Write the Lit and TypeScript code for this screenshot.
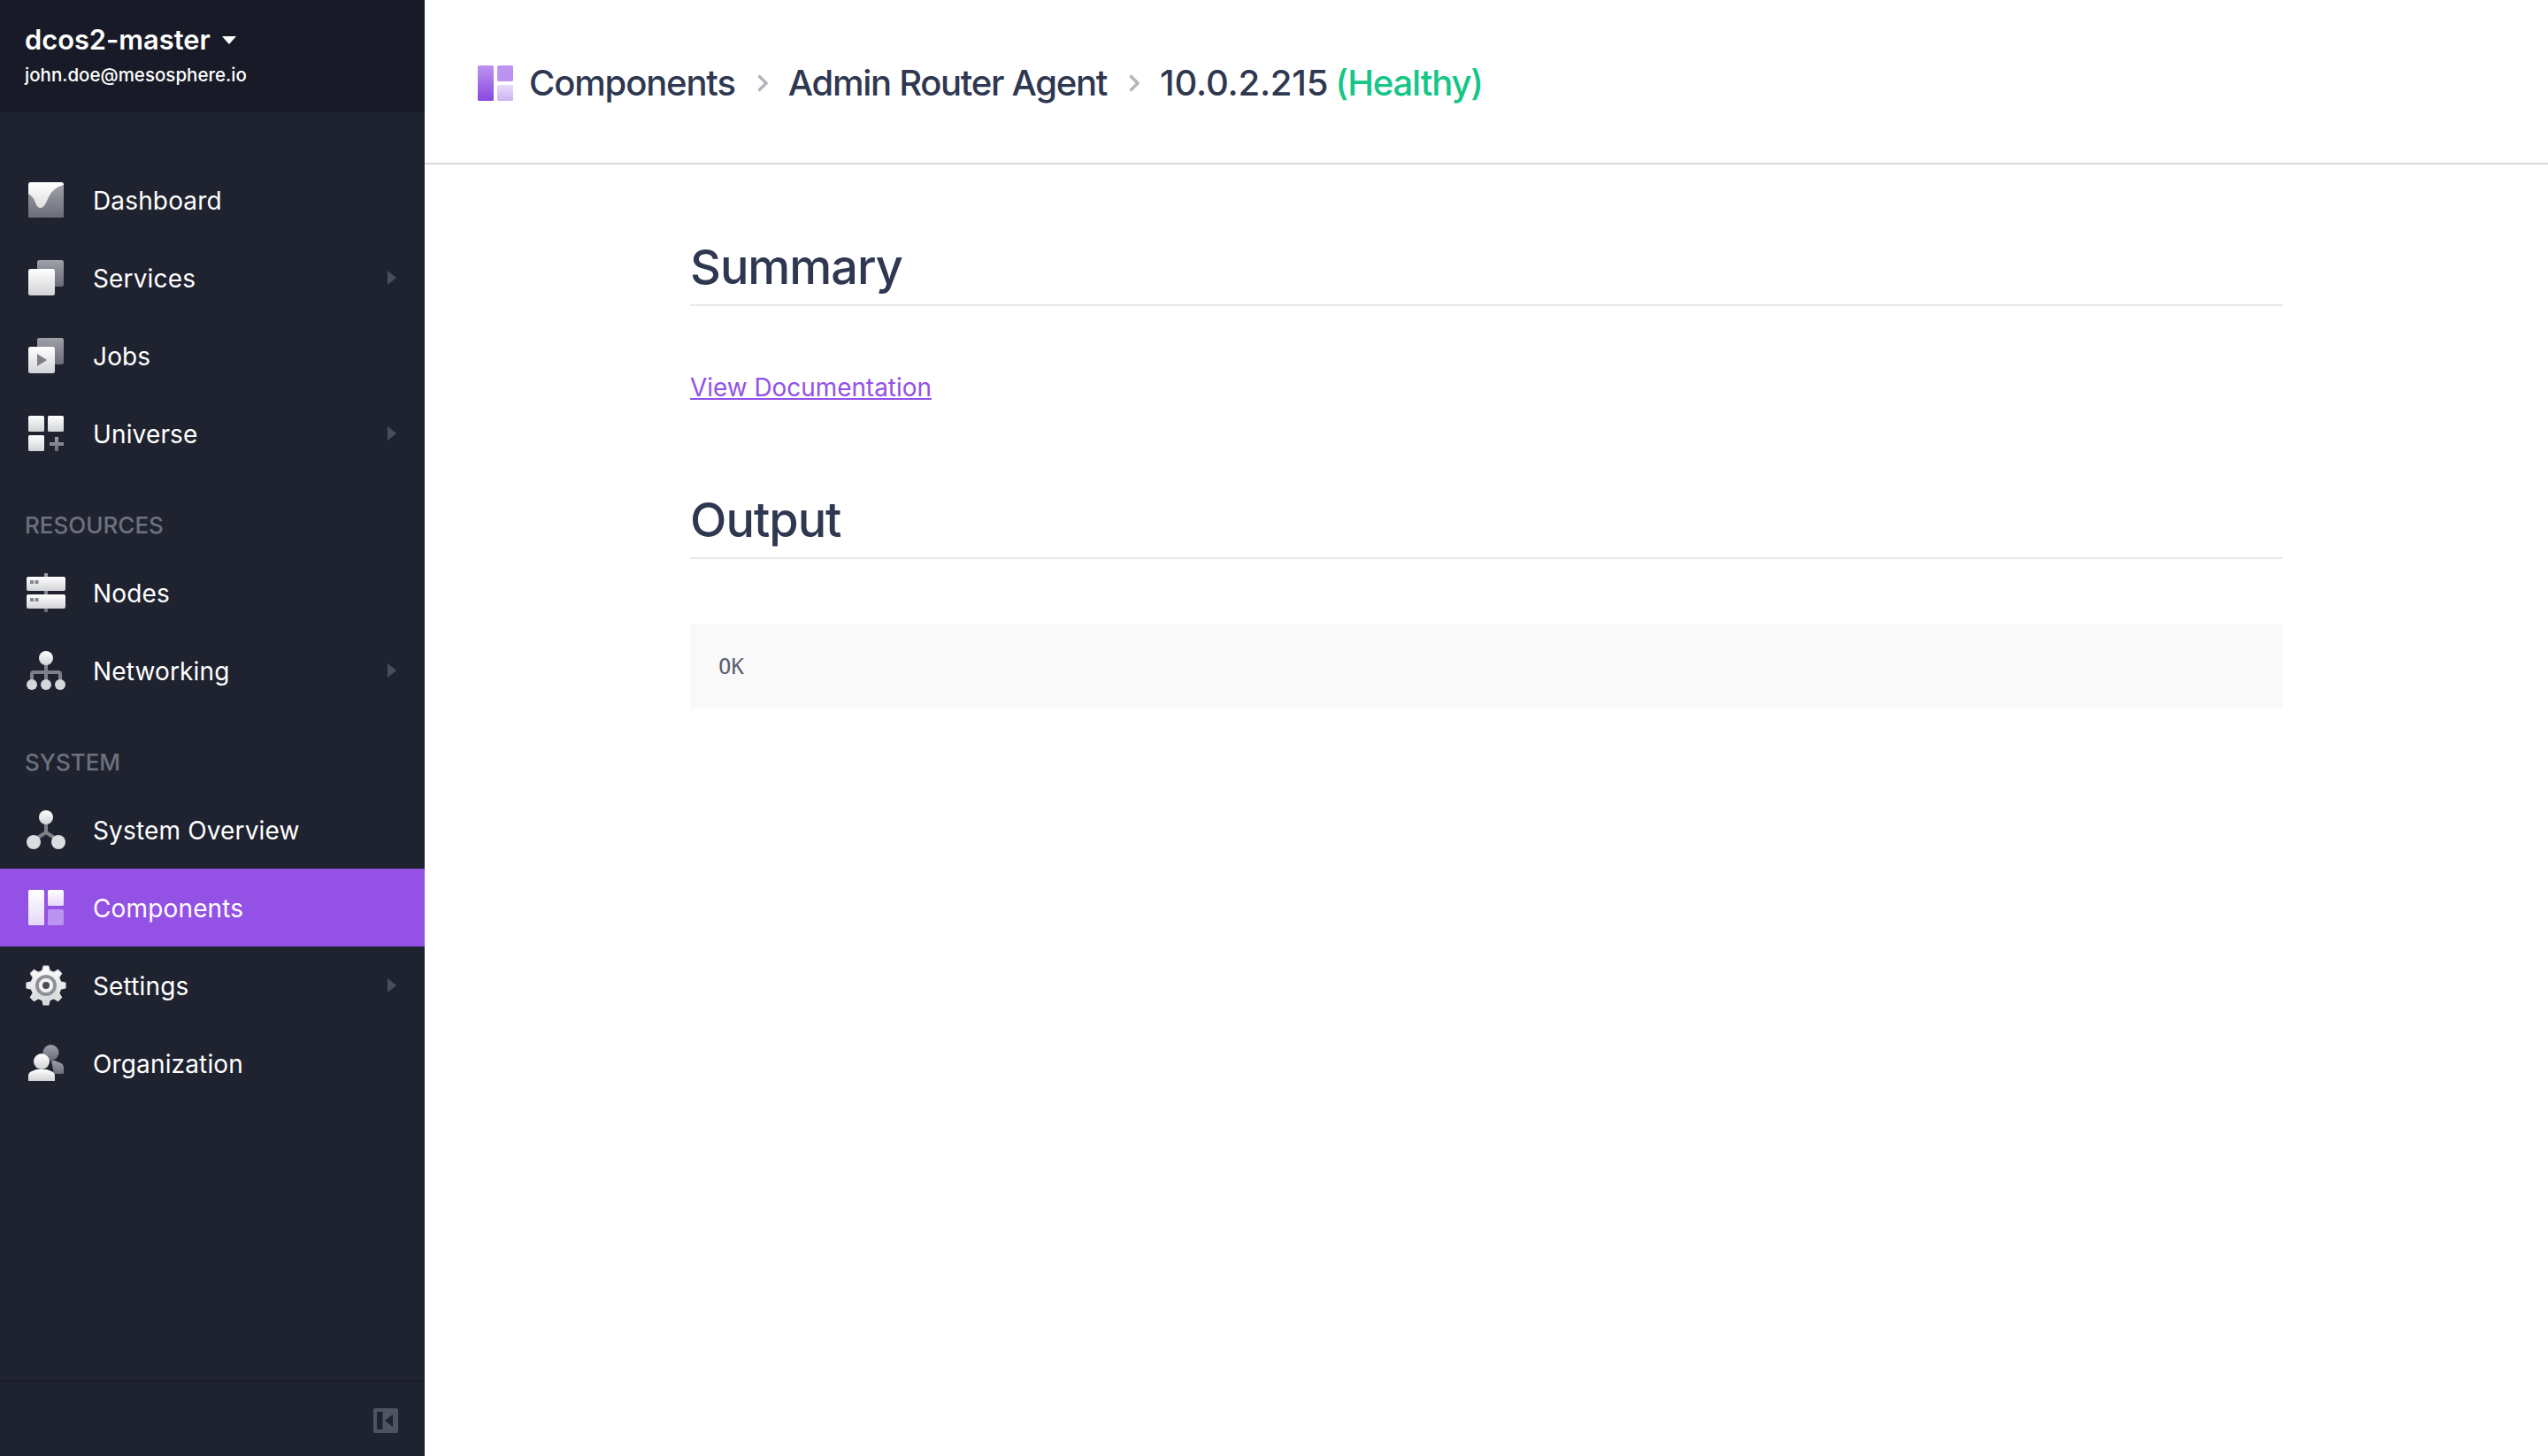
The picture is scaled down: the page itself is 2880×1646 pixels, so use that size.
import { LitElement, html, css, svg } from 'lit';
import { customElement } from 'lit/decorators.js';

// all sidebar icons sit in a 48x48 box
const light = 'url(#lt)';
const dark = 'url(#dk)';

const defs = svg`
  <defs>
    <linearGradient id="lt" x1="0" y1="0" x2="0" y2="1">
      <stop offset="0" stop-color="#ffffff" /><stop offset="1" stop-color="#d2d3d6" />
    </linearGradient>
    <linearGradient id="dk" x1="0" y1="0" x2="0" y2="1">
      <stop offset="0" stop-color="#9fa0a7" /><stop offset="1" stop-color="#6a6c78" />
    </linearGradient>
    <linearGradient id="wh" x1="0" y1="0" x2="0" y2="1">
      <stop offset="0" stop-color="#ffffff" /><stop offset="1" stop-color="#e6d8f9" />
    </linearGradient>
    <linearGradient id="pu" x1="0" y1="0" x2="0" y2="1">
      <stop offset="0" stop-color="#bd93f2" /><stop offset="1" stop-color="#8a48e0" />
    </linearGradient>
    <linearGradient id="pl" x1="0" y1="0" x2="0" y2="1">
      <stop offset="0" stop-color="#e8dcf9" /><stop offset="1" stop-color="#cdb2f1" />
    </linearGradient>
  </defs>
`;

const gearPath = (() => {
  let d = '';
  const teeth = 8;
  for (let i = 0; i < teeth; i++) {
    const a = (i / teeth) * Math.PI * 2 - Math.PI / 2;
    const step = (Math.PI * 2) / teeth;
    const pts: [number, number][] = [
      [a - step * 0.3, 17],
      [a - step * 0.16, 22],
      [a + step * 0.16, 22],
      [a + step * 0.3, 17],
    ];
    for (const [t, r] of pts) {
      const x = (24 + Math.cos(t) * r).toFixed(2);
      const y = (24 + Math.sin(t) * r).toFixed(2);
      d += (d ? 'L' : 'M') + x + ' ' + y;
    }
  }
  return d + 'Z';
})();

const icons: Record<string, unknown> = {
  dashboard: svg`
    <rect x="4" y="4" width="40" height="40" rx="2.500" fill=${light} />
    <path d="M4 17c4 2 6 5 8 10 1.500 4 3 6 6 6 4 0 6-6 9-12 3-7 9-12 17-14v34.500a2.500 2.500 0 0 1-2.500 2.500H6.500a2.500 2.500 0 0 1-2.500-2.500z" fill=${dark} />
  `,
  services: svg`
    <rect x="14" y="4" width="30" height="30" rx="2.500" fill=${dark} />
    <rect x="4" y="14" width="30" height="30" rx="2.500" fill=${light} />
  `,
  jobs: svg`
    <rect x="14" y="4" width="30" height="30" rx="2.500" fill=${dark} />
    <rect x="4" y="14" width="30" height="30" rx="2.500" fill=${light} />
    <path d="M14 22l11 7-11 7z" fill="#7d7f89" />
  `,
  universe: svg`
    <rect x="4" y="4" width="18" height="18" rx="1.500" fill=${light} />
    <rect x="26" y="4" width="18" height="18" rx="1.500" fill=${light} />
    <rect x="4" y="26" width="18" height="18" rx="1.500" fill=${light} />
    <path d="M34 28h4v6h6v4h-6v6h-4v-6h-6v-4h6z" fill=${dark} />
  `,
  nodes: svg`
    <rect x="22" y="2" width="4" height="44" fill=${dark} />
    <rect x="2" y="6" width="44" height="16" rx="2" fill=${light} />
    <rect x="2" y="26" width="44" height="16" rx="2" fill=${light} />
    <path d="M6 10h4v4H6zM11.500 10h4v4h-4zM6 30h4v4H6zM11.500 30h4v4h-4z" fill="#85878f" />
  `,
  networking: svg`
    <path d="M24 16v20M8 36v-8a2 2 0 0 1 2-2h28a2 2 0 0 1 2 2v8" fill="none" stroke="#7d7f89" stroke-width="4" />
    <circle cx="24" cy="10" r="8" fill=${light} />
    <circle cx="8" cy="40" r="6" fill="#d6d7da" />
    <circle cx="24" cy="40" r="6" fill="#d6d7da" />
    <circle cx="40" cy="40" r="6" fill="#d6d7da" />
  `,
  overview: svg`
    <path d="M24 14v13M10 36l14-9 14 9" fill="none" stroke="#7d7f89" stroke-width="4" />
    <circle cx="24" cy="10" r="8" fill=${light} />
    <circle cx="10" cy="38" r="8" fill="#dcdde0" />
    <circle cx="38" cy="38" r="8" fill="#dcdde0" />
  `,
  components: svg`
    <rect x="4" y="4" width="18" height="40" rx="1.500" fill="url(#wh)" />
    <rect x="26" y="4" width="18" height="18" rx="1.500" fill="url(#wh)" />
    <rect x="26" y="26" width="18" height="18" rx="1.500" fill="#bb93f1" />
  `,
  settings: svg`
    <path d=${gearPath} fill=${light} stroke="#e6e6e8" stroke-width="1.500" stroke-linejoin="round" />
    <circle cx="24" cy="24" r="10" fill="none" stroke="#8e9098" stroke-width="4" />
    <circle cx="24" cy="24" r="6" fill="none" stroke="#f0f0f2" stroke-width="4" />
    <circle cx="24" cy="24" r="4" fill="#4a4c58" />
  `,
  organization: svg`
    <circle cx="29.500" cy="12" r="9" fill=${dark} />
    <path d="M30 21h4l5 2c3 1 5 3 5 6v7H33z" fill=${dark} />
    <circle cx="19" cy="22" r="9" fill=${light} />
    <path d="M4 38c0-2.500 1.500-4 4-5l5-2h12l5 2c2.500 1 4 2.500 4 5v6H4z" fill=${light} />
  `,
};

interface NavItem {
  label: string;
  icon: string;
  arrow?: boolean;
  active?: boolean;
}

interface NavGroup {
  title?: string;
  items: NavItem[];
}

const groups: NavGroup[] = [
  {
    items: [
      { label: 'Dashboard', icon: 'dashboard' },
      { label: 'Services', icon: 'services', arrow: true },
      { label: 'Jobs', icon: 'jobs' },
      { label: 'Universe', icon: 'universe', arrow: true },
    ],
  },
  {
    title: 'RESOURCES',
    items: [
      { label: 'Nodes', icon: 'nodes' },
      { label: 'Networking', icon: 'networking', arrow: true },
    ],
  },
  {
    title: 'SYSTEM',
    items: [
      { label: 'System Overview', icon: 'overview' },
      { label: 'Components', icon: 'components', active: true },
      { label: 'Settings', icon: 'settings', arrow: true },
      { label: 'Organization', icon: 'organization' },
    ],
  },
];

@customElement('app-root')
export class AppRoot extends LitElement {
  static styles = css`
    :host {
      display: flex;
      height: 1646px;
      font-family: Inter, 'Liberation Sans', sans-serif;
      background: #fff;
      overflow: hidden;
    }
    .sidebar {
      width: 480px;
      flex: none;
      display: flex;
      flex-direction: column;
      background: #1f2330;
      color: #fff;
    }
    .cluster {
      height: 127px;
      box-sizing: border-box;
      padding: 24px 28px 0;
      background: #181b27;
    }
    .cluster-name {
      display: flex;
      align-items: center;
      gap: 13px;
      font-size: 30.8px;
      font-weight: 600;
      line-height: 42px;
    }
    .caret {
      width: 0;
      height: 0;
      border-left: 8px solid transparent;
      border-right: 8px solid transparent;
      border-top: 9px solid #fff;
    }
    .cluster-user {
      font-size: 20.5px;
      font-weight: 500;
      line-height: 30px;
      margin-top: 4px;
    }
    nav {
      flex: 1;
      padding-top: 55px;
    }
    .group-title {
      padding: 44px 28px 16px;
      font-size: 26px;
      font-weight: 500;
      line-height: 32px;
      color: #6e717e;
    }
    .item {
      display: flex;
      align-items: center;
      height: 88px;
      padding: 0 32px 0 28px;
      gap: 29px;
      font-size: 28px;
      letter-spacing: 0.15px;
    }
    .item.active {
      background: #9351e5;
    }
    .item svg {
      width: 48px;
      height: 48px;
      flex: none;
    }
    .item .label {
      flex: 1;
      padding-top: 1px;
    }
    .arrow {
      width: 0;
      height: 0;
      border-top: 8px solid transparent;
      border-bottom: 8px solid transparent;
      border-left: 10px solid #4a4e5c;
    }
    .foot {
      height: 86px;
      box-sizing: border-box;
      border-top: 2px solid #181b27;
      padding: 4px 30px 0 0;
      display: flex;
      align-items: center;
      justify-content: flex-end;
    }
    .foot svg {
      width: 28px;
      height: 28px;
    }
    main {
      flex: 1;
      min-width: 0;
      color: #2f3850;
    }
    .page-header {
      border-bottom: 2px solid #d8d8dc;
      padding: 3px 0 0 60px;
      box-sizing: content-box;
      height: 181px;
      display: flex;
      align-items: center;
      font-size: 40px;
      font-weight: 450;
      letter-spacing: -1.15px;
    }
    .logo {
      width: 40px;
      height: 40px;
      margin-right: 18px;
    }
    .chev {
      width: 12px;
      height: 20px;
      margin: 0 23px 0 25px;
      flex: none;
    }
    .agent {
      letter-spacing: -1.3px;
    }
    .ip {
      letter-spacing: -0.17px;
    }
    .healthy {
      color: #15c686;
      margin-left: 8px;
    }
    .content {
      padding: 0 300px;
    }
    h2 {
      margin: 0;
      font-size: 54px;
      font-weight: 450;
      line-height: 68px;
      letter-spacing: -1px;
      padding-bottom: 8px;
      border-bottom: 2px solid #e8e8ec;
    }
    .first {
      margin-top: 82px;
    }
    .link {
      display: block;
      font-size: 27.9px;
      line-height: 40px;
      color: #9351e5;
      margin: 72px 0 96px;
    }
    .link a {
      color: inherit;
    }
    pre {
      margin: 73px 0 0;
      height: 96px;
      padding: 2px 32px 0;
      box-sizing: border-box;
      display: flex;
      align-items: center;
      background: #f9f9fa;
      font-family: 'DejaVu Sans Mono', monospace;
      font-size: 24px;
      color: #5c6070;
    }
  `;

  private renderItem(item: NavItem) {
    return html`
      <div class="item ${item.active ? 'active' : ''}">
        <svg viewBox="0 0 48 48">${defs}${icons[item.icon]}</svg>
        <span class="label">${item.label}</span>
        ${item.arrow ? html`<span class="arrow"></span>` : ''}
      </div>
    `;
  }

  private chevron() {
    return html`<svg class="chev" viewBox="0 0 12 20">
      <path d="M1.500 1.500L10 10l-8.500 8.500" fill="none" stroke="#b4b6bd" stroke-width="3.500" />
    </svg>`;
  }

  render() {
    return html`
      <aside class="sidebar">
        <div class="cluster">
          <div class="cluster-name">dcos2-master <span class="caret"></span></div>
          <div class="cluster-user">john.doe@mesosphere.io</div>
        </div>
        <nav>
          ${groups.map(
            (g) => html`
              ${g.title ? html`<div class="group-title">${g.title}</div>` : ''}
              ${g.items.map((i) => this.renderItem(i))}
            `
          )}
        </nav>
        <div class="foot">
          <svg viewBox="0 0 28 28">
            <path
              fill-rule="evenodd"
              d="M2 0h24a2 2 0 0 1 2 2v24a2 2 0 0 1-2 2H2a2 2 0 0 1-2-2V2a2 2 0 0 1 2-2zM4 4v20h6.500V4zM22 7l-9 7 9 7z"
              fill="#4f5364"
            />
          </svg>
        </div>
      </aside>
      <main>
        <header class="page-header">
          <svg class="logo" viewBox="0 0 40 40">
            ${defs}
            <rect x="0" y="0" width="18" height="40" rx="1.500" fill="url(#pu)" />
            <rect x="22" y="0" width="18" height="18" rx="1.500" fill="#bd93f2" />
            <rect x="22" y="22" width="18" height="18" rx="1.500" fill="url(#pl)" />
          </svg>
          <span>Components</span>
          ${this.chevron()}
          <span class="agent">Admin Router Agent</span>
          ${this.chevron()}
          <span class="ip">10.0.2.215</span>
          <span class="healthy">(Healthy)</span>
        </header>
        <div class="content">
          <section>
            <h2 class="first">Summary</h2>
            <div class="link"><a href="#">View Documentation</a></div>
          </section>
          <section>
            <h2>Output</h2>
            <pre>OK</pre>
          </section>
        </div>
      </main>
    `;
  }
}
